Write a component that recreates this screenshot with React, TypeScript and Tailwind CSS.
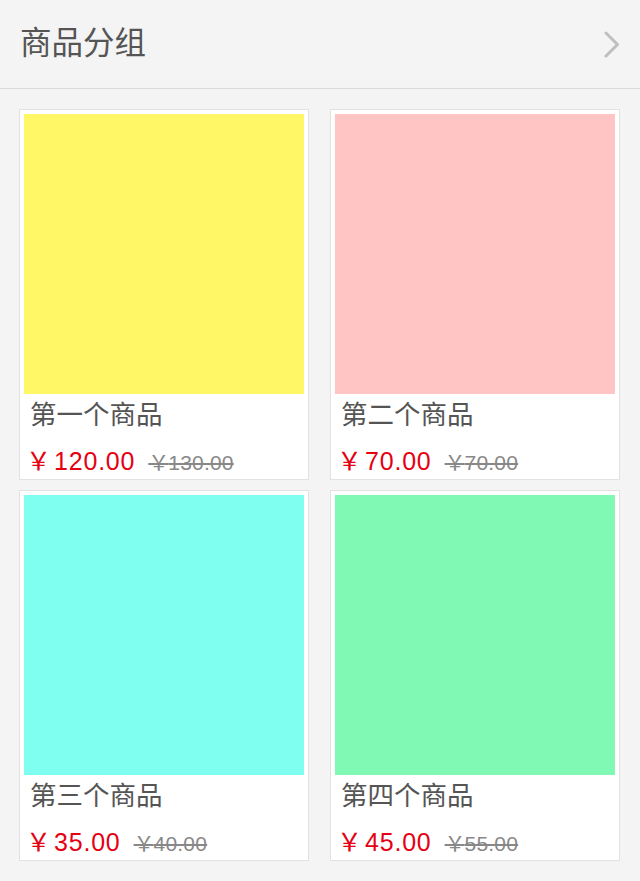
import React from "react";

const products = [
  { name: "第一个商品", price: "120.00", old: "130.00", color: "bg-[#fff766]" },
  { name: "第二个商品", price: "70.00", old: "70.00", color: "bg-[#ffc4c4]" },
  { name: "第三个商品", price: "35.00", old: "40.00", color: "bg-[#7ffff0]" },
  { name: "第四个商品", price: "45.00", old: "55.00", color: "bg-[#80f9b5]" },
];

const font = { fontFamily: '"Liberation Sans", "Noto Sans CJK SC", sans-serif' };

export default function App() {
  return (
    <div className="w-[640px] min-h-[881px] bg-[#f4f4f4]" style={font}>
      <div className="h-[89px] flex items-center justify-between pl-[20px] pr-[20px] border-b border-[#dadada]">
        <span className="text-[31.5px] leading-none text-[#555555] -mt-[1px]">商品分组</span>
        <svg width="16" height="27" viewBox="0 0 16 27">
          <path d="M2 2 L13.5 13.5 L2 25" fill="none" stroke="#bfbfbf" strokeWidth="3" strokeLinecap="round" strokeLinejoin="round" />
        </svg>
      </div>
      <div className="grid grid-cols-[290px_290px] gap-x-[21px] gap-y-[10px] pl-[19px] pt-[20px] pb-[20px]">
        {products.map((p) => (
          <div key={p.name} className="bg-white border border-[#e2e2e2] p-[4px] h-[371px] flex flex-col">
            <div className={`h-[280px] w-full ${p.color}`} />
            <div className="pl-[6px] mt-[8px] text-[26.5px] leading-[26px] text-[#555555]">{p.name}</div>
            <div className="pl-[2px] mt-[21px] flex items-baseline leading-none whitespace-nowrap">
              <span className="text-[25px] text-[#e50012]">
                <span className="tracking-[3px]">￥</span>
                <span className="tracking-[0.8px]">{p.price}</span>
              </span>
              <span className="ml-[13px] text-[21px] text-[#888888] line-through">
                <span className="tracking-[-1px]">￥</span>
                <span className="tracking-[0.2px]">{p.old}</span>
              </span>
            </div>
          </div>
        ))}
      </div>
    </div>
  );
}
